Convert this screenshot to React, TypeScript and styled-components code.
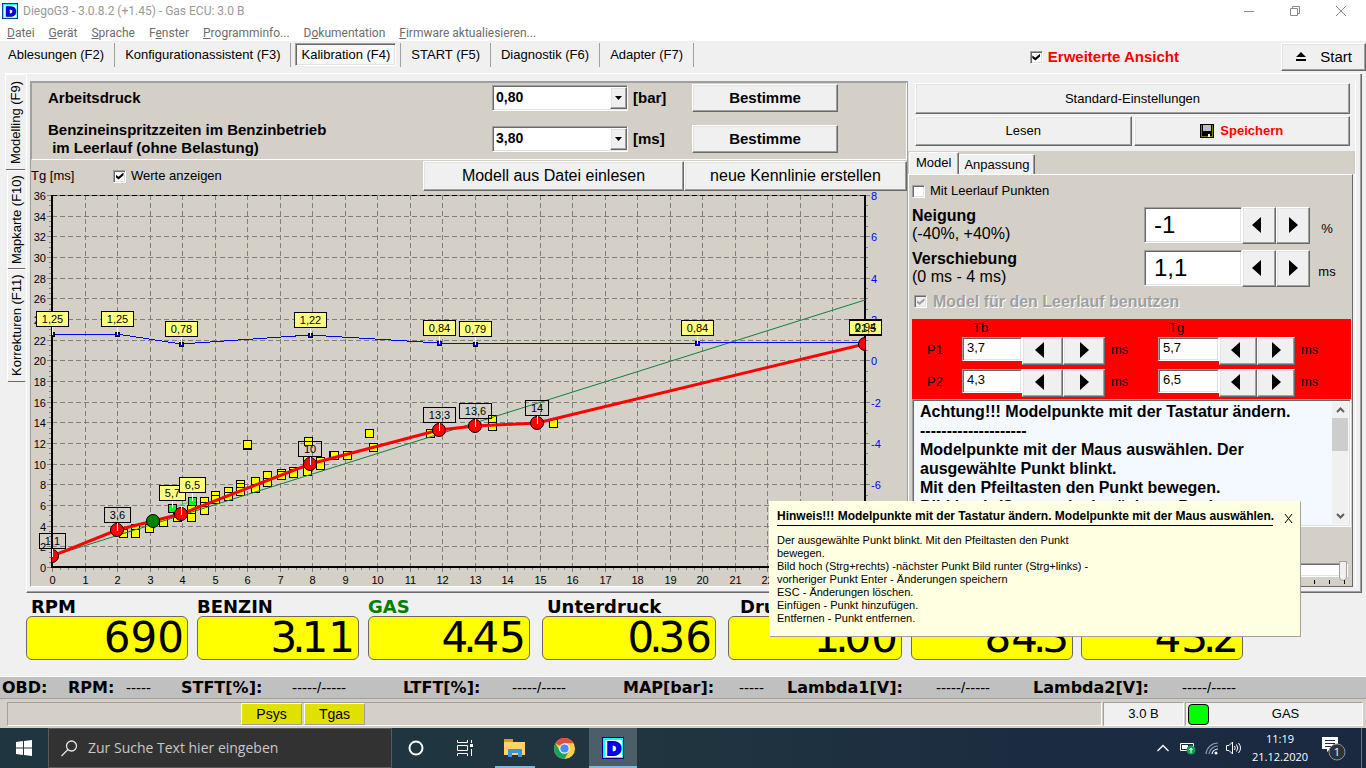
import React from "react";
import styled, { createGlobalStyle, css } from "styled-components";

const Global = createGlobalStyle`
  * { box-sizing: border-box; }
  body { margin: 0; background: #f0f0f0; }
  button, input, select, textarea { font: inherit; color: inherit; margin: 0; }
`;

const face = "#f0f0f0";
const beige = "#d4d0c8";
const ui = `"Liberation Sans", Arial, sans-serif`;
const chrome = `Roboto, "Noto Sans", sans-serif`;
const shell = `"Open Sans", "Noto Sans", sans-serif`;
const wide = `"DejaVu Sans", Verdana, sans-serif`;

const raised = css`
  border: 1px solid;
  border-color: #ffffff #696969 #696969 #ffffff;
  box-shadow: inset -1px -1px #a0a0a0, inset 1px 1px #e3e3e3;
`;
const sunken = css`
  border: 1px solid;
  border-color: #a0a0a0 #ffffff #ffffff #a0a0a0;
  box-shadow: inset 1px 1px #696969, inset -1px -1px #e3e3e3;
`;

const Page = styled.div`
  position: relative;
  min-height: 100vh;
  display: flex;
  flex-direction: column;
  background: ${face};
  color: #000;
  font: 13px/16px ${ui};
  overflow: hidden;
`;

/* window chrome */
const TitleBar = styled.header`
  display: flex;
  align-items: center;
  height: 22px;
  padding: 0 16px 0 2px;
  background: #fff;
  color: #999;
  font: 12px/16px ${chrome};
`;
const Title = styled.h1`
  flex: 1;
  margin: 0 0 0 5px;
  font: inherit;
`;
const CaptionButton = styled.button`
  width: 17px;
  height: 17px;
  padding: 0;
  margin-left: 29px;
  border: 0;
  background: none;
  svg { display: block; }
`;
const MenuBar = styled.nav`
  display: flex;
  align-items: center;
  gap: 14px;
  height: 19px;
  padding: 2px 0 0 7px;
  background: #fff;
  color: #6d6d6d;
  font: 12px/16px ${chrome};
`;
const MenuItem = styled.button`
  padding: 0;
  border: 0;
  background: none;
  white-space: nowrap;
`;

/* tool bar */
const ToolBar = styled.div`
  display: flex;
  align-items: flex-start;
  height: 32px;
  padding: 2px 0 0;
`;
const ToolCell = styled.div`
  height: 24px;
  padding: 0 4px;
  border-right: 1px solid #a0a0a0;
  &:first-child { padding-left: 2px; }
`;
const ToolButton = styled.button<{ $on?: boolean }>`
  height: 23px;
  padding: ${(p) => (p.$on ? "1px 5px 0" : "0 5px")};
  border: 1px solid transparent;
  background: none;
  white-space: nowrap;
  ${(p) => p.$on && css`
    ${sunken}
    background: #f8f8f8;
  `}
`;
const ExtendedLabel = styled.label`
  display: flex;
  align-items: center;
  gap: 5px;
  height: 28px;
  margin: 0 102px 0 auto;
  color: #f00;
  font-weight: bold;
  font-size: 15px;
`;
const StartButton = styled.button`
  ${raised}
  display: flex;
  align-items: center;
  justify-content: flex-end;
  gap: 14px;
  width: 85px;
  height: 28px;
  padding: 0 13px;
  background: ${face};
  font-size: 15px;
`;

const Check = styled.input.attrs({ type: "checkbox" })`
  ${sunken}
  appearance: none;
  display: grid;
  place-items: center;
  flex: none;
  width: 13px;
  height: 13px;
  background: #fff;
  &:checked::before {
    content: "";
    width: 8px;
    height: 7px;
    background: #000;
    clip-path: polygon(0 30%, 38% 62%, 100% 0, 100% 38%, 38% 100%, 0 66%);
  }
  &:disabled { background: ${face}; }
  &:disabled::before { background: #a0a0a0; }
`;

/* workspace */
const Workspace = styled.main`
  display: flex;
  margin: 0 4px 0 5px;
  border-top: 1px solid #fff;
`;
const Rail = styled.div`
  display: flex;
  flex-direction: column;
  align-items: flex-end;
  width: 21px;
`;
const RailTab = styled.button<{ $on?: boolean; $h: number }>`
  width: ${(p) => (p.$on ? 21 : 19)}px;
  height: ${(p) => p.$h}px;
  padding: 0;
  border: 1px solid;
  border-color: #696969 #fff #fff transparent;
  border-radius: 2px;
  background: ${face};
  writing-mode: vertical-rl;
  transform: rotate(180deg);
  white-space: nowrap;
  line-height: 16px;
`;
const Frame = styled.div`
  flex: 1;
  min-width: 0;
  display: grid;
  grid-template-columns: minmax(0, 1fr) 448px;
  padding: 7px 5px 5px 3px;
  border: 1px solid;
  border-color: transparent #696969 #696969 #fff;
  border-top: 0;
  box-shadow: inset -1px -1px #a0a0a0;
`;
const ChartPane = styled.section`
  background: ${beige};
  border: 1px solid;
  border-color: #a0a0a0 #a0a0a0 #fff #a0a0a0;
`;
const Params = styled.div`
  display: flex;
  flex-direction: column;
  gap: 9px;
  padding: 1px 0 2px 16px;
  border: 1px solid;
  border-color: #a0a0a0 #fff #fff #a0a0a0;
  font-weight: bold;
  font-size: 15px;
  line-height: 18px;
`;
const ParamRow = styled.div<{ $tall?: boolean }>`
  display: grid;
  grid-template-columns: 444px 136px 64px 146px;
  align-items: center;
  height: ${(p) => (p.$tall ? 36 : 28)}px;
`;
const ParamLabel = styled.label`
  white-space: pre-line;
`;
const Combo = styled.div`
  position: relative;
  height: 26px;
`;
const ComboSelect = styled.select`
  ${sunken}
  appearance: none;
  width: 100%;
  height: 26px;
  padding: 0 20px 2px 3px;
  border-radius: 0;
  background: #fff;
  font-weight: bold;
  font-size: 14px;
`;
const ComboArrow = styled.span`
  ${raised}
  position: absolute;
  top: 2px;
  right: 1px;
  width: 17px;
  height: 22px;
  display: grid;
  place-items: center;
  background: ${face};
  pointer-events: none;
`;
const Unit = styled.span`
  padding-left: 5px;
`;
const PushButton = styled.button<{ $size?: number; $bold?: boolean; $red?: boolean; $h: number }>`
  ${raised}
  display: flex;
  align-items: center;
  justify-content: center;
  gap: 6px;
  width: 100%;
  height: ${(p) => p.$h}px;
  padding: 0;
  background: ${face};
  font-size: ${(p) => p.$size ?? 13}px;
  font-weight: ${(p) => (p.$bold ? "bold" : "normal")};
  color: ${(p) => (p.$red ? "#f00" : "#000")};
`;
const ActionRow = styled.div`
  display: grid;
  grid-template-columns: 82px 1fr 261px 223px;
  align-items: center;
  height: 31px;
  padding-top: 1px;
`;
const CheckLabel = styled.label`
  display: flex;
  align-items: center;
  gap: 5px;
`;
const ChartSvg = styled.svg`
  display: block;
  width: 100%;
  height: auto;
  font-family: ${ui};
  font-size: 11px;
`;

/* right side */
const SidePane = styled.section`
  display: flex;
  flex-direction: column;
  border-right: 1px solid #fff;
`;
const SideButtons = styled.div`
  display: grid;
  grid-template-columns: 1fr 1fr;
  gap: 2px;
  padding: 2px 5px 5px 7px;
  > :first-child { grid-column: 1 / 3; }
`;
const TabStrip = styled.div`
  display: flex;
  align-items: flex-end;
  height: 23px;
  padding-left: 1px;
  background: ${beige};
`;
const Tab = styled.button<{ $on?: boolean }>`
  height: ${(p) => (p.$on ? 22 : 20)}px;
  padding: ${(p) => (p.$on ? "0 7px 2px 6px" : "0 5px 0 4px")};
  border: 1px solid;
  border-color: #fff #696969 transparent #fff;
  border-bottom: 0;
  border-radius: 2px 2px 0 0;
  box-shadow: inset -1px 0 #a0a0a0;
  background: ${face};
`;
const TabPage = styled.div`
  flex: 1;
  margin-right: 2px;
  padding: 3px 1px 0 3px;
  border: 1px solid;
  border-color: #fff #696969 #696969 #fff;
  background: ${beige};
`;
const IdleCheck = styled(CheckLabel)`
  height: 26px;
  margin-bottom: 3px;
`;
const ModelCheck = styled(CheckLabel)`
  height: 17px;
  margin-bottom: 9px;
  padding-left: 2px;
  gap: 6px;
  color: #a0a0a0;
  font-weight: bold;
  font-size: 16px;
  text-shadow: 1px 1px #fff;
`;
const AdjustRow = styled.div`
  display: grid;
  grid-template-columns: 1fr 98px 34px 34px 34px;
  align-items: start;
  height: 43px;
  margin-right: 7px;
`;
const AdjustLabel = styled.label`
  font-size: 16px;
  line-height: 18px;
`;
const TextBox = styled.input<{ $big?: boolean }>`
  ${sunken}
  width: 100%;
  height: ${(p) => (p.$big ? 36 : 24)}px;
  padding: ${(p) => (p.$big ? "0 9px" : "0 4px 3px")};
  background: #fff;
  font-size: ${(p) => (p.$big ? 24 : 13)}px;
`;
const StepButton = styled.button<{ $h: number; $back?: boolean }>`
  ${raised}
  display: grid;
  place-items: center;
  width: 100%;
  height: ${(p) => p.$h}px;
  padding: ${(p) => (p.$back ? "0 6px 2px 0" : "0 0 2px")};
  background: ${face};
`;
const AdjustUnit = styled.span`
  line-height: 44px;
  text-align: center;
`;
const RedGrid = styled.div`
  display: grid;
  grid-template-columns: 50px 60px 41px 42px 53px 61px 38px 38px 1fr;
  grid-template-rows: 18px 32px 30px;
  background: #f00;
  line-height: 26px;
`;
const RedHead = styled.span<{ $col: number }>`
  grid-column: ${(p) => p.$col};
  padding-left: 11px;
  line-height: 17px;
`;
const RedLabel = styled.label`
  padding-left: 15px;
`;
const RedUnit = styled.span`
  padding-left: 6px;
`;
const Memo = styled.div`
  ${sunken}
  display: flex;
  height: 128px;
  padding: 2px;
  background: #f4f8ff;
`;
const MemoText = styled.textarea`
  flex: 1;
  min-width: 0;
  padding: 0 5px;
  border: 0;
  resize: none;
  overflow: hidden;
  background: none;
  white-space: pre;
  font: bold 16px/19px ${ui};
`;
const ScrollBar = styled.div`
  display: flex;
  flex-direction: column;
  width: 16px;
  background: ${face};
`;
const ScrollArrow = styled.button`
  display: grid;
  place-items: center;
  height: 16px;
  padding: 0;
  border: 0;
  background: none;
  &:last-child { margin-top: auto; }
`;
const ScrollThumb = styled.div`
  height: 33px;
  background: #cdcdcd;
`;
const SliderBox = styled.div`
  padding: 32px 3px 0 8px;
`;
const Slider = styled.input.attrs({ type: "range" })`
  appearance: none;
  display: block;
  width: 100%;
  height: 21px;
  background: none;
  &::-webkit-slider-runnable-track {
    ${sunken}
    height: 14px;
    background: #fff;
  }
  &::-webkit-slider-thumb {
    appearance: none;
    width: 8px;
    height: 20px;
    margin-top: -3px;
    border: 1px solid #a0a0a0;
    border-radius: 0 0 4px 4px;
    background: ${face};
  }
`;
const Ticks = styled.div`
  display: flex;
  justify-content: space-between;
  height: 4px;
  padding: 0 3px;
  span { width: 1px; background: #000; }
`;

/* gauges */
const Gauges = styled.section`
  display: grid;
  grid-template-columns: 171fr 171fr 174fr 186fr 183fr 170fr 285fr;
  padding: 3px 0 16px 26px;
`;
const GaugeName = styled.div<{ $green?: boolean; $indent: number }>`
  height: 20px;
  padding-left: ${(p) => p.$indent}px;
  font: bold 18px/22px ${wide};
  color: ${(p) => (p.$green ? "#008000" : "#000")};
`;
const GaugeBox = styled.output<{ $w: number }>`
  display: block;
  width: ${(p) => p.$w}px;
  height: 44px;
  padding-right: 3px;
  border: 1px solid #696969;
  border-radius: 6px;
  background: #ff0;
  text-align: right;
  font: 42px/42px ${wide};
`;
const Point = styled.span`
  margin: 0 -4px 0 -5px;
`;

/* OBD and status rows */
const ObdBar = styled.section`
  display: grid;
  grid-template-columns: 66fr 58fr 55fr 111fr 111fr 109fr 111fr 116fr 48fr 149fr 97fr 149fr 184fr;
  align-items: center;
  height: 23px;
  padding-left: 2px;
  border-top: 1px solid #fff;
  border-bottom: 1px solid #a0a0a0;
  background: #c0c0c0;
  font-size: 15px;
  line-height: 20px;
  white-space: nowrap;
`;
const ObdName = styled.span`
  font: bold 16px/20px ${wide};
`;
const StatusBar = styled.footer`
  display: flex;
  gap: 1px;
  height: 29px;
  padding: 3px 3px 2px 7px;
  background: ${beige};
`;
const StatusPanel = styled.div<{ $w?: number; $face?: boolean }>`
  display: flex;
  align-items: center;
  gap: 2px;
  flex: ${(p) => (p.$w ? "none" : "1")};
  width: ${(p) => (p.$w ? `${p.$w}px` : "auto")};
  height: 24px;
  padding: 0 2px;
  border: 1px solid;
  border-color: #a0a0a0 #fff #fff #a0a0a0;
  background: ${(p) => (p.$face ? face : beige)};
  font-size: 13px;
`;
const StatusText = styled.span`
  flex: 1;
  text-align: center;
`;
const SensorFlags = styled.div`
  display: flex;
  gap: 2px;
  margin-left: 231px;
`;
const SensorFlag = styled.span`
  width: 61px;
  height: 22px;
  border: 1px solid;
  border-color: #fff #a0a0a0 #a0a0a0 #fff;
  background: #e1e100;
  text-align: center;
  font-size: 14px;
  line-height: 20px;
`;
const Lamp = styled.span`
  width: 21px;
  height: 21px;
  border: 1px solid #000;
  border-radius: 4px;
  background: #0f0;
`;

/* hint */
const Hint = styled.aside`
  position: absolute;
  top: 501px;
  right: 65px;
  width: 532px;
  height: 136px;
  padding: 8px 7px;
  border: 1px solid;
  border-color: #ffffe1 #a0a0a0 #a0a0a0 #ffffe1;
  background: #ffffe1;
  font-size: 11px;
  line-height: 13px;
`;
const HintHead = styled.div`
  display: flex;
  gap: 11px;
  height: 22px;
`;
const HintTitle = styled.h2`
  width: 496px;
  height: 16px;
  margin: 0;
  border-bottom: 1px solid #000;
  font: bold 12px/13px ${ui};
  white-space: nowrap;
`;
const HintClose = styled.button`
  height: 12px;
  margin-top: 3px;
  padding: 0;
  border: 0;
  background: none;
`;
const HintText = styled.p`
  margin: 2px 0 0;
  white-space: pre-line;
`;

/* task bar */
const TaskBar = styled.footer`
  display: flex;
  height: 40px;
  background: linear-gradient(90deg, #1f3640 0%, #20353f 45%, #1b2b41 80%, #1a2940 100%);
  color: #fff;
  font: 12px/16px ${shell};
`;
const TaskButton = styled.button<{ $w: number; $active?: boolean }>`
  display: grid;
  place-items: center;
  flex: none;
  width: ${(p) => p.$w}px;
  padding: 0;
  border: 0;
  background: ${(p) => (p.$active ? "#4c5e67" : "none")};
  box-shadow: ${(p) => (p.$active ? "inset 0 -2px #76b9ed" : "none")};
`;
const RunningMark = styled.span`
  display: grid;
  place-items: center;
  width: 40px;
  height: 40px;
  box-shadow: inset 0 -2px #76b9ed;
`;
const SearchBox = styled.label`
  display: flex;
  align-items: center;
  gap: 10px;
  width: 344px;
  padding-left: 12px;
  border: 1px solid #5a5a5a;
  background: #323232;
`;
const SearchInput = styled.input`
  flex: 1;
  min-width: 0;
  padding: 0;
  border: 0;
  background: none;
  font: 14px/20px ${shell};
  &::placeholder { color: #c8c8c8; opacity: 1; }
`;
const Tray = styled.div`
  display: flex;
  align-items: center;
  margin-left: auto;
`;
const Clock = styled.time`
  width: 72px;
  text-align: center;
  line-height: 18px;
  font-size: 11px;
`;
const DesktopEdge = styled.button`
  width: 5px;
  height: 40px;
  margin-left: 9px;
  padding: 0;
  border: 0;
  border-left: 1px solid #66707e;
  background: none;
`;

const Logo = ({ size }: { size: number }) => (
  <svg width={size} height={size} viewBox="0 0 22 22" aria-hidden="true">
    <rect width="22" height="22" fill="#000080" />
    <rect x="1" y="1" width="20" height="20" fill="#00ffff" />
    <rect x="3" y="3" width="17" height="17" fill="#fff" />
    <text x="12" y="18" textAnchor="middle" fontFamily="DejaVu Sans" fontWeight="bold" fontSize="18" fill="#0000ff" stroke="#000080" strokeWidth="2" paintOrder="stroke">D</text>
  </svg>
);

const Arrow = ({ right, size = 14 }: { right?: boolean; size?: number }) => (
  <svg width="9" height={size + 2} viewBox="0 0 9 16" aria-hidden="true">
    <path d={right ? "M0 0V16L9 8Z" : "M9 0V16L0 8Z"} fill="#000" />
  </svg>
);

/* chart data in plot coordinates */
const X0 = 52, X1 = 865, Y0 = 567, Y1 = 195;
const colX = (n: number) => Math.round(X0 + (n * (X1 - X0)) / 25) + 0.5;
const rowY = (n: number) => Math.round(Y0 - (n * (Y0 - Y1)) / 36) + 0.5;

const samples: [number, number][] = [
  [123, 533], [135, 528], [135, 533], [149, 528], [163, 522], [177, 517], [191, 509], [191, 517],
  [204, 501], [204, 506], [204, 510], [215, 495], [215, 499], [228, 491], [228, 496], [240, 484],
  [240, 487], [240, 491], [255, 481], [255, 488], [267, 475], [267, 482], [281, 473], [281, 475],
  [293, 471], [293, 473], [247, 445], [247, 444], [308, 441], [307, 460], [307, 471], [320, 461],
  [320, 465], [333, 455], [334, 455], [347, 455], [373, 447], [369, 433], [430, 433], [492, 419],
  [492, 426], [553, 423],
];
const model: [number, number][] = [
  [52, 556], [117, 530], [181, 514], [310, 464], [439, 430], [475, 426], [537, 423], [865, 344],
];
const corr: [number, number][] = [
  [52, 334], [117, 334], [181, 344], [310, 335], [439, 343], [475, 344], [697, 343], [865, 342],
];
const plainTags: [number, number, number, string][] = [
  [39, 533, 26, "1,1"], [104, 507, 26, "3,6"], [298, 441, 23, "10"], [423, 407, 32, "13,3"],
  [459, 403, 32, "13,6"], [525, 400, 23, "14"], [849, 320, 32, "21,5"],
];
const yellowTags: [number, number, number, string][] = [
  [36, 311, 32, "1,25"], [101, 311, 32, "1,25"], [165, 321, 32, "0,78"], [294, 312, 32, "1,22"],
  [423, 320, 32, "0,84"], [459, 321, 32, "0,79"], [681, 320, 32, "0,84"],
  [159, 485, 26, "5,7"], [179, 477, 26, "6,5"],
];
const pts = (list: [number, number][]) => list.map((p) => p.join(",")).join(" ");
const range = (n: number) => Array.from({ length: n }, (_, i) => i);

const Tag = ({ x, y, w, text, fill }: { x: number; y: number; w: number; text: string; fill: string }) => (
  <g>
    <rect x={x + 0.5} y={y + 0.5} width={w} height="15" fill={fill} stroke="#000" />
    <text x={x + w / 2 + 0.5} y={y + 12} textAnchor="middle">{text}</text>
  </g>
);

const Chart = () => (
  <ChartSvg viewBox="31 191 876 395" role="img" aria-label="Kennlinie">
    <defs>
      <clipPath id="plot"><rect x={X0} y="190" width={X1 - X0} height="390" /></clipPath>
    </defs>
    <g stroke="#808080" strokeDasharray="5 3">
      {range(24).map((i) => <line key={i} x1={colX(i + 1)} x2={colX(i + 1)} y1={Y1} y2={Y0} />)}
      {range(17).map((i) => <line key={i} x1={X0} x2={X1} y1={rowY(2 * i + 2)} y2={rowY(2 * i + 2)} />)}
    </g>
    <line x1={X0} x2={X1} y1="195.5" y2="195.5" stroke="#808080" />
    <line x1={X0} x2={X1} y1="195.5" y2="195.5" stroke="#000" strokeDasharray="5 3" />
    <g stroke="#808080">
      {range(19).map((i) => <line key={i} x1="47" x2="51" y1={rowY(2 * i)} y2={rowY(2 * i)} />)}
      {range(72).map((i) => <line key={i} x1="49" x2="51" y1={rowY(i / 2)} y2={rowY(i / 2)} />)}
      {range(101).map((i) => <line key={i} x1={colX(i / 4)} x2={colX(i / 4)} y1="568" y2={i % 4 ? 570 : 572} />)}
      {range(37).map((i) => <line key={i} x1="866" x2={i % 4 ? 868 : 870} y1={rowY(i)} y2={rowY(i)} />)}
    </g>
    <g>
      {range(19).map((i) => <text key={i} x="46" y={rowY(2 * i) + 4} textAnchor="end">{2 * i}</text>)}
      {range(23).map((i) => <text key={i} x={colX(i)} y="584" textAnchor="middle">{i}</text>)}
    </g>
    <g fill="#0000ff">
      {range(8).map((i) => <text key={i} x="871" y={rowY(36 - 4 * i) + 4}>{8 - 2 * i}</text>)}
    </g>
    <rect x="51" y="195" width="2" height="373" fill="#000" />
    <rect x="864" y="195" width="2" height="373" fill="#000" />
    <rect x="51" y="566" width="815" height="2" fill="#000" />
    <g clipPath="url(#plot)">
      <g fill="#ff0" stroke="#000" shapeRendering="crispEdges">
        {samples.map(([x, y], i) => <rect key={i} x={x - 4} y={y - 4} width="8" height="8" />)}
      </g>
      <line x1="52" y1="556" x2="865" y2="300" stroke="#108040" />
      <polyline points="172,508 192,501" stroke="#30e030" fill="none" />
      <polyline points={pts(corr)} fill="none" stroke="#0000ff" shapeRendering="crispEdges" />
      <polyline points={pts(model)} fill="none" stroke="#f00" strokeWidth="3" />
      {corr.map(([x, y]) => <rect key={x} x={x - 1.5} y={y - 1.5} width="4" height="4" fill="#0000ff" stroke="#000" />)}
      <g fill="#00ff21" stroke="#000" shapeRendering="crispEdges">
        <rect x="168" y="504" width="8" height="8" />
        <rect x="188" y="497" width="8" height="8" />
      </g>
      <g stroke="#000">
        {model.map(([x, y]) => <circle key={x} cx={x} cy={y} r="6.5" fill="#f00" />)}
        <circle cx="153" cy="521" r="6.5" fill="#008000" />
      </g>
    </g>
    <g stroke="#fff">
      {model.slice(0, -1).map(([x, y]) => <line key={x} x1={x + 0.5} x2={x + 0.5} y1={y - 8} y2={y + 1} />)}
      {corr.slice(0, -1).map(([x, y]) => <line key={x} x1={x + 0.5} x2={x + 0.5} y1={y - 8} y2={y + 1} />)}
      <line x1="172.5" x2="172.5" y1="500" y2="508" />
      <line x1="192.5" x2="192.5" y1="492" y2="501" />
    </g>
    {plainTags.map(([x, y, w, t]) => <Tag key={x} x={x} y={y} w={w} text={t} fill={x > 800 ? "#ffff80" : "none"} />)}
    {yellowTags.map(([x, y, w, t]) => <Tag key={x} x={x} y={y} w={w} text={t} fill="#ffff80" />)}
    <Tag x={849} y={319} w={32} text="0,94" fill="none" />
  </ChartSvg>
);

const menu: [string, string, string][] = [
  ["", "D", "atei"], ["", "G", "erät"], ["", "S", "prache"], ["F", "e", "nster"],
  ["", "P", "rogramminfo..."], ["D", "o", "kumentation"], ["", "F", "irmware aktualiesieren..."],
];
const tools = ["Ablesungen (F2)", "Konfigurationassistent (F3)", "Kalibration (F4)", "START (F5)", "Diagnostik (F6)", "Adapter (F7)"];
const gauges: { name: string; value: string; w: number; indent: number; green?: boolean }[] = [
  { name: "RPM", value: "690", w: 162, indent: 5 },
  { name: "BENZIN", value: "3.11", w: 162, indent: 0 },
  { name: "GAS", value: "4.45", w: 162, indent: 0, green: true },
  { name: "Unterdruck", value: "0.36", w: 174, indent: 5 },
  { name: "Druck", value: "1.00", w: 174, indent: 12 },
  { name: "", value: "84.3", w: 162, indent: 0 },
  { name: "", value: "43.2", w: 162, indent: 0 },
];
const obd: [string, string][] = [
  ["RPM:", "-----"], ["STFT[%]:", "-----/-----"], ["LTFT[%]:", "-----/-----"],
  ["MAP[bar]:", "-----"], ["Lambda1[V]:", "-----/-----"], ["Lambda2[V]:", "-----/-----"],
];
const memo = `Achtung!!! Modelpunkte mit der Tastatur ändern.
--------------------
Modelpunkte mit der Maus auswählen. Der
ausgewählte Punkt blinkt.
Mit den Pfeiltasten den Punkt bewegen.
Bild hoch (Strg+rechts) -nächster Punkt`;
const hint = `Der ausgewählte Punkt blinkt. Mit den Pfeiltasten den Punkt
bewegen.
Bild hoch (Strg+rechts) -nächster Punkt Bild runter (Strg+links) -
vorheriger Punkt Enter - Änderungen speichern
ESC - Änderungen löschen.
Einfügen - Punkt hinzufügen.
Entfernen - Punkt entfernen.`;

const ParamField = ({ id, label, value, unit, tall }: { id: string; label: string; value: string; unit: string; tall?: boolean }) => (
  <ParamRow $tall={tall}>
    <ParamLabel htmlFor={id}>{label}</ParamLabel>
    <Combo>
      <ComboSelect id={id} defaultValue={value}><option>{value}</option></ComboSelect>
      <ComboArrow><svg width="7" height="4"><path d="M0 0H7L3.5 4Z" /></svg></ComboArrow>
    </Combo>
    <Unit>{unit}</Unit>
    <PushButton $h={28} $size={15} $bold>Bestimme</PushButton>
  </ParamRow>
);

const Adjust = ({ id, name, span, value, unit }: { id: string; name: string; span: string; value: string; unit: string }) => (
  <AdjustRow>
    <AdjustLabel htmlFor={id}><b>{name}</b><br />{span}</AdjustLabel>
    <TextBox $big id={id} defaultValue={value} />
    <StepButton $h={37} $back aria-label="weniger"><Arrow size={16} /></StepButton>
    <StepButton $h={37} aria-label="mehr"><Arrow right size={16} /></StepButton>
    <AdjustUnit>{unit}</AdjustUnit>
  </AdjustRow>
);

const PointField = ({ id, label, value }: { id: string; label: string; value: string }) => (
  <>
    <TextBox id={id} aria-label={label} defaultValue={value} />
    <StepButton $h={28} $back aria-label="weniger"><Arrow /></StepButton>
    <StepButton $h={28} aria-label="mehr"><Arrow right /></StepButton>
    <RedUnit>ms</RedUnit>
  </>
);

export default function App() {
  return (
    <Page>
      <Global />
      <TitleBar>
        <Logo size={16} />
        <Title>DiegoG3 - 3.0.8.2 (+1.45) - Gas ECU: 3.0 B</Title>
        <CaptionButton aria-label="Minimieren">
          <svg width="17" height="17" stroke="#8a8a8a" fill="none"><path d="M3 8.5H13" /></svg>
        </CaptionButton>
        <CaptionButton aria-label="Verkleinern">
          <svg width="17" height="17" stroke="#8a8a8a" fill="none"><path d="M3.5 5.5H10.5V12.5H3.5ZM5.5 5.5V3.5H12.5V10.5H10.5" /></svg>
        </CaptionButton>
        <CaptionButton aria-label="Schließen">
          <svg width="17" height="17" stroke="#8a8a8a" fill="none"><path d="M3 3L13 13M13 3L3 13" /></svg>
        </CaptionButton>
      </TitleBar>
      <MenuBar>
        {menu.map(([a, u, b]) => <MenuItem key={b}>{a}<u>{u}</u>{b}</MenuItem>)}
      </MenuBar>
      <ToolBar>
        {tools.map((t, i) => (
          <ToolCell key={t}><ToolButton $on={i === 2}>{t}</ToolButton></ToolCell>
        ))}
        <ExtendedLabel><Check defaultChecked />Erweiterte Ansicht</ExtendedLabel>
        <StartButton>
          <svg width="10" height="10" aria-hidden="true"><path d="M5 0L10 5H0ZM0 7H10V9H0Z" /></svg>
          Start
        </StartButton>
      </ToolBar>
      <Workspace>
        <Rail>
          <RailTab $on $h={96}>Modelling (F9)</RailTab>
          <RailTab $h={99}>Mapkarte (F10)</RailTab>
          <RailTab $h={113}>Korrekturen (F11)</RailTab>
        </Rail>
        <Frame>
          <ChartPane>
            <Params>
              <ParamField id="druck" label="Arbeitsdruck" value="0,80" unit="[bar]" />
              <ParamField id="zeit" label={"Benzineinspritzzeiten im Benzinbetrieb\n\u00a0im Leerlauf (ohne Belastung)"} value="3,80" unit="[ms]" tall />
            </Params>
            <ActionRow>
              <span>Tg [ms]</span>
              <CheckLabel><Check defaultChecked />Werte anzeigen</CheckLabel>
              <PushButton $h={30} $size={16}>Modell aus Datei einlesen</PushButton>
              <PushButton $h={30} $size={16}>neue Kennlinie erstellen</PushButton>
            </ActionRow>
            <Chart />
          </ChartPane>
          <SidePane>
            <SideButtons>
              <PushButton $h={31}>Standard-Einstellungen</PushButton>
              <PushButton $h={30}>Lesen</PushButton>
              <PushButton $h={30} $bold $red>
                <svg width="14" height="14" aria-hidden="true">
                  <rect width="14" height="14" fill="#000" />
                  <path d="M1 1H2V12H12V1H13V13H1Z" fill="#808000" />
                  <rect x="3" y="1" width="8" height="6" fill="#c0c0c0" />
                  <rect x="8" y="10" width="2" height="3" fill="#fff" />
                </svg>
                Speichern
              </PushButton>
            </SideButtons>
            <TabStrip>
              <Tab $on>Model</Tab>
              <Tab>Anpassung</Tab>
            </TabStrip>
            <TabPage>
              <IdleCheck><Check />Mit Leerlauf Punkten</IdleCheck>
              <Adjust id="neigung" name="Neigung" span="(-40%, +40%)" value="-1" unit="%" />
              <Adjust id="versch" name="Verschiebung" span="(0 ms - 4 ms)" value="1,1" unit="ms" />
              <ModelCheck><Check defaultChecked disabled />Model für den Leerlauf benutzen</ModelCheck>
              <RedGrid>
                <RedHead $col={2}>Tb</RedHead>
                <RedHead $col={6}>Tg</RedHead>
                <span /><span /><span />
                <RedLabel htmlFor="p1b">P1</RedLabel>
                <PointField id="p1b" label="P1 Tb" value="3,7" />
                <PointField id="p1g" label="P1 Tg" value="5,7" />
                <RedLabel htmlFor="p2b">P2</RedLabel>
                <PointField id="p2b" label="P2 Tb" value="4,3" />
                <PointField id="p2g" label="P2 Tg" value="6,5" />
              </RedGrid>
              <Memo>
                <MemoText aria-label="Hinweise" readOnly defaultValue={memo} />
                <ScrollBar>
                  <ScrollArrow aria-label="nach oben">
                    <svg width="9" height="6" fill="none" stroke="#606060" strokeWidth="2"><path d="M1 5L4.5 1.5L8 5" /></svg>
                  </ScrollArrow>
                  <ScrollThumb />
                  <ScrollArrow aria-label="nach unten">
                    <svg width="9" height="6" fill="none" stroke="#606060" strokeWidth="2"><path d="M1 1L4.5 4.5L8 1" /></svg>
                  </ScrollArrow>
                </ScrollBar>
              </Memo>
              <SliderBox>
                <Slider aria-label="Position" defaultValue={100} />
                <Ticks>{range(29).map((i) => <span key={i} />)}</Ticks>
              </SliderBox>
            </TabPage>
          </SidePane>
        </Frame>
      </Workspace>
      <Gauges>
        {gauges.map((g) => {
          const [a, b] = g.value.split(".");
          return (
            <div key={g.value}>
              <GaugeName $indent={g.indent} $green={g.green}>{g.name}</GaugeName>
              <GaugeBox $w={g.w}>{a}{b && <><Point>.</Point>{b}</>}</GaugeBox>
            </div>
          );
        })}
      </Gauges>
      <ObdBar>
        <ObdName>OBD:</ObdName>
        {obd.map(([n, v]) => (
          <React.Fragment key={n}><ObdName>{n}</ObdName><span>{v}</span></React.Fragment>
        ))}
      </ObdBar>
      <StatusBar>
        <StatusPanel>
          <SensorFlags>
            <SensorFlag>Psys</SensorFlag>
            <SensorFlag>Tgas</SensorFlag>
          </SensorFlags>
        </StatusPanel>
        <StatusPanel $w={81} $face><StatusText>3.0 B</StatusText></StatusPanel>
        <StatusPanel $w={178} $face><Lamp /><StatusText>GAS</StatusText></StatusPanel>
      </StatusBar>
      <TaskBar>
        <TaskButton $w={48} aria-label="Start">
          <svg width="16" height="16" fill="#fff"><path d="M0 2L7 1V7.500H0ZM8 1L16 0V7.500H8ZM0 8.500H7V15L0 14ZM8 8.500H16V16L8 15Z" /></svg>
        </TaskButton>
        <SearchBox>
          <svg width="17" height="17" fill="none" stroke="#e6e6e6" strokeWidth="1.300"><circle cx="10.500" cy="6" r="5" /><path d="M7 9.500L0.500 16" /></svg>
          <SearchInput type="search" aria-label="Suche" placeholder="Zur Suche Text hier eingeben" />
        </SearchBox>
        <TaskButton $w={48} aria-label="Cortana">
          <svg width="16" height="16" fill="none" stroke="#fff" strokeWidth="2"><circle cx="8" cy="8" r="6.500" /></svg>
        </TaskButton>
        <TaskButton $w={49} aria-label="Aufgabenansicht">
          <svg width="18" height="16" fill="none" stroke="#fff"><path d="M1.500 0V2.500H11.500V0M1.500 16V13.500H11.500V16M1.500 5.500H11.500V10.500H1.500ZM15.500 0V3M15.500 9V16" /><rect x="14" y="4" width="3" height="3" fill="#fff" stroke="none" /></svg>
        </TaskButton>
        <TaskButton $w={51} aria-label="Explorer">
          <RunningMark>
            <svg width="22" height="19">
              <path d="M0 0H9V3H0Z" fill="#e0a00c" />
              <path d="M0 3H21V16H0Z" fill="#ffd367" />
              <path d="M4 18V11Q4 10 5 10H17Q18 10 18 11V18H14V14H8V18Z" fill="#3a93dc" />
            </svg>
          </RunningMark>
        </TaskButton>
        <TaskButton $w={49} aria-label="Chrome">
          <svg width="23" height="23" viewBox="0 0 24 24">
            <circle cx="12" cy="12" r="11" fill="#ffce44" />
            <path d="M12 12L2.500 6.500A11 11 0 0 1 21.500 6.500H12Z" fill="#dd5144" />
            <path d="M2.500 6.500A11 11 0 0 0 12 23L16.800 14.700L7.200 14.700Z" fill="#1aa260" />
            <circle cx="12" cy="12" r="5.500" fill="#f1f1f1" />
            <circle cx="12" cy="12" r="4.300" fill="#4a8af4" />
          </svg>
        </TaskButton>
        <TaskButton $w={48} $active aria-label="DiegoG3">
          <Logo size={22} />
        </TaskButton>
        <Tray>
          <TaskButton $w={25} aria-label="Ausgeblendete Symbole">
            <svg width="12" height="8" fill="none" stroke="#fff" strokeWidth="1.300"><path d="M0.500 7L6 1.500L11.500 7" /></svg>
          </TaskButton>
          <TaskButton $w={25} aria-label="Akku">
            <svg width="16" height="14" fill="none" stroke="#fff"><path d="M0.500 2.500H13.500V9.500H0.500Z" /><path d="M2 4H8V8H2Z" fill="#fff" stroke="none" /><circle cx="11" cy="9" r="4.500" fill="#10a050" stroke="none" /><path d="M11 12V8M9.500 9L11 7L12.500 9" /></svg>
          </TaskButton>
          <TaskButton $w={24} aria-label="WLAN">
            <svg width="14" height="14" fill="none" stroke="#8f9aa8" strokeWidth="1.200"><path d="M1 13A12 12 0 0 1 13 2" /><path d="M4 13A9 9 0 0 1 13 5" /><path d="M7 13A6 6 0 0 1 13 8" stroke="#fff" /><circle cx="11" cy="12" r="1.500" fill="#fff" stroke="none" /></svg>
          </TaskButton>
          <TaskButton $w={20} aria-label="Lautstärke">
            <svg width="16" height="14" fill="none" stroke="#fff"><path d="M0.500 4.500H3L6.500 1V13L3 9.500H0.500Z" /><path d="M8.500 5Q10 7 8.500 9M10.500 3.500Q13 7 10.500 10.500M12.500 2Q16.500 7 12.500 12" /></svg>
          </TaskButton>
          <Clock>11:19<br />21.12.2020</Clock>
          <TaskButton $w={36} aria-label="Benachrichtigungen">
            <svg width="26" height="26">
              <path d="M1 2H17V14H9L6 17V14H1Z" fill="#fff" />
              <path d="M4 5.500H14M4 8.500H14M4 11.500H10" stroke="#1b2b41" />
              <circle cx="16" cy="17" r="8" fill="#2b333d" stroke="#8a8f96" />
              <text x="16" y="21" textAnchor="middle" fontSize="11" fill="#fff">1</text>
            </svg>
          </TaskButton>
          <DesktopEdge aria-label="Desktop anzeigen" />
        </Tray>
      </TaskBar>
      <Hint role="dialog" aria-label="Hinweis">
        <HintHead>
          <HintTitle>Hinweis!!! Modelpunkte mit der Tastatur ändern. Modelpunkte mit der Maus auswählen.</HintTitle>
          <HintClose aria-label="Schließen">
            <svg width="9" height="9" stroke="#000"><path d="M1 0L8 9M8 0L1 9" /></svg>
          </HintClose>
        </HintHead>
        <HintText>{hint}</HintText>
      </Hint>
    </Page>
  );
}
